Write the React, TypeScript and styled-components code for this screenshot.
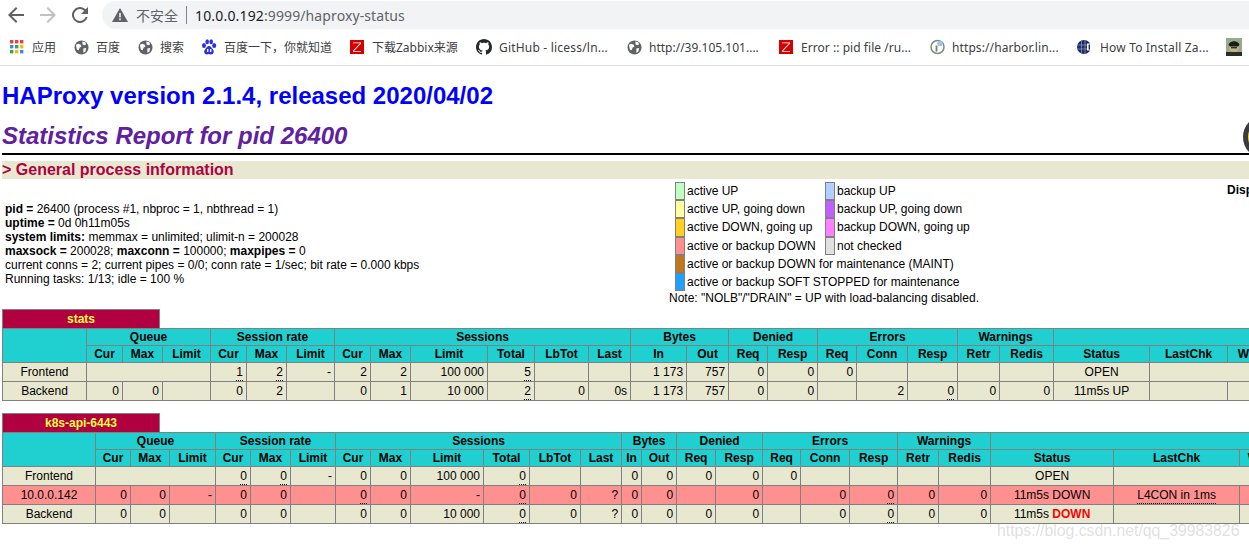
import React from "react";
import styled, { createGlobalStyle } from "styled-components";

const Global = createGlobalStyle`
  html, body { margin: 0; padding: 0; background: #fff; }
  body { font-family: "Liberation Sans", Arial, sans-serif; font-size: 12px; color: #000; overflow: hidden; }
`;

const Viewport = styled.div`
  position: relative;
  width: 1249px;
  height: 549px;
  overflow: hidden;
`;

/* ---------- browser chrome ---------- */
const Chrome = styled.header`
  height: 65px;
  border-bottom: 1px solid #dadce0;
  background: #fff;
  font-family: "Noto Sans", "Noto Sans CJK SC", sans-serif;
`;
const Toolbar = styled.div`
  height: 29px;
  display: flex;
  align-items: center;
  padding: 1px 0 0 0;
  box-sizing: border-box;
`;
const NavButton = styled.span`
  flex: none;
  width: 32px;
  height: 24px;
  display: flex;
  align-items: center;
  justify-content: center;
  color: ${p => p.$off ? "#bdc1c6" : "#5f6368"};
`;
const NavGroup = styled.div`
  display: flex;
  width: 102px;
  padding-left: 0;
  box-sizing: border-box;
`;
const Omnibox = styled.div`
  flex: 1;
  height: 28px;
  border-radius: 14px 0 0 14px;
  background: #f1f3f4;
  display: flex;
  align-items: center;
  padding-left: 10px;
  font-size: 14px;
`;
const Insecure = styled.span`
  margin-left: 8px;
  color: #5f6368;
  font-size: 14px;
  font-family: "Noto Sans CJK SC", sans-serif;
`;
const Divider = styled.span`
  width: 1px;
  height: 18px;
  background: #80868b;
  margin: 0 8px 0 8px;
`;
const Host = styled.span`
  color: #202124;
  font-size: 14px;
  letter-spacing: 0.17px;
`;
const UrlRest = styled.span`
  color: #5f6368;
  font-size: 14px;
  letter-spacing: 0.1px;
`;
const Bookmarks = styled.nav`
  height: 36px;
  display: flex;
  align-items: center;
  padding-left: 9px;
  gap: 17px;
  white-space: nowrap;
`;
const Bookmark = styled.div`
  display: flex;
  align-items: center;
  flex: none;
  gap: 7px;
  color: #3c4043;
  font-size: 12px;
  font-family: "Noto Sans", "Noto Sans CJK SC", sans-serif;
`;
const IconBox = styled.span`
  flex: none;
  width: 16px;
  height: 18px;
  display: flex;
  align-items: center;
  justify-content: center;
`;
const Label = styled.span`
  display: block;
  width: ${p => p.$w}px;
  overflow: hidden;
  letter-spacing: ${p => p.$ls ?? 0}px;
`;

/* ---------- page ---------- */
const Page = styled.main`
  width: 1600px;
  padding: 0 0 0 2px;
  box-sizing: border-box;
`;
const Version = styled.h1`
  margin: 16px 0 0 0;
  font-size: 24px;
  line-height: 28px;
  font-weight: bold;
  color: #0000ff;
  white-space: nowrap;
`;
const TitleRow = styled.div`
  margin-top: 12px;
  display: flex;
  height: 31px;
  width: 1285px;
  align-items: flex-start;
  justify-content: space-between;
`;
const Report = styled.h2`
  margin: 0;
  font-size: 24px;
  line-height: 28px;
  font-weight: bold;
  font-style: italic;
  color: #6020a0;
`;
const Logo = styled.svg`
  display: block;
  margin-top: -7px;
  flex: none;
`;
const Rule = styled.hr`
  margin: 0;
  border: 0;
  height: 2px;
  background: #000;
`;
const SectionTitle = styled.h3`
  margin: 6px 0 0 0;
  height: 18px;
  line-height: 18px;
  font-size: 16px;
  font-weight: bold;
  color: #b00040;
  background: #e8e8d0;
`;
const InfoBlock = styled.section`
  display: flex;
  height: 130px;
  font-size: 12px;
`;
const ProcessInfo = styled.div`
  width: 667px;
  box-sizing: border-box;
  padding: 23px 0 0 3px;
  line-height: 14px;
  flex: none;
`;
const Line = styled.div`
  white-space: nowrap;
`;
const Legend = styled.div`
  width: 558px;
  flex: none;
  padding-top: 3px;
`;
const LegendGrid = styled.div`
  display: grid;
  grid-template-columns: 150px 1fr;
  margin-left: 6px;
`;
const LegendItem = styled.div`
  display: flex;
  align-items: center;
  height: 18.2px;
  white-space: nowrap;
  grid-column: ${p => p.$span ? "1 / span 2" : "auto"};
`;
const Swatch = styled.span`
  flex: none;
  align-self: stretch;
  width: 8px;
  margin-right: 2px;
  border: 1px solid #808080;
  background: ${p => p.$c};
`;
const Note = styled.div`
  white-space: nowrap;
  line-height: 14px;
`;
const Display = styled.div`
  font-weight: bold;
  padding-top: 4px;
  white-space: nowrap;
`;

const Proxy = styled.section`
  margin-bottom: 12px;
`;
const ProxyName = styled.div`
  width: 156px;
  height: 18px;
  line-height: 19px;
  border: 1px solid #808080;
  border-bottom: 0;
  background: #b00040;
  color: #ffff40;
  font-weight: bold;
  text-align: center;
`;
const StatTable = styled.table`
  border-collapse: collapse;
  table-layout: fixed;
  width: ${p => p.$w}px;
`;
const Col = styled.col`
  width: ${p => p.$w}px;
`;
const HeadCell = styled.th`
  background: #20d0d0;
  border: 1px solid #808080;
  padding: 0;
  height: 16px;
  line-height: 14px;
  font-weight: bold;
  font-size: 12px;
  text-align: center;
  white-space: nowrap;
  overflow: hidden;
`;
const DataCell = styled.td`
  background: ${p => p.$down ? "#ff9090" : "#e8e8d0"};
  border: 1px solid #808080;
  padding: 0 3px;
  height: 18px;
  line-height: 14px;
  font-size: 12px;
  text-align: ${p => p.$center ? "center" : "right"};
  white-space: nowrap;
  overflow: hidden;
`;
const Dotted = styled.span`
  border-bottom: 1px dotted #000;
  padding-bottom: 1px;
`;
const DownText = styled.span`
  color: #ff0000;
  font-weight: bold;
`;

const Watermark = styled.div`
  position: absolute;
  left: 997px;
  top: 523px;
  font-size: 15.8px;
  line-height: 16px;
  color: rgba(185, 185, 185, 0.45);
  white-space: nowrap;
`;

/* ---------- icons ---------- */
const Back = ({ flip = false }: { flip?: boolean }) => (
  <svg width="16" height="16" viewBox="0 0 16 16" style={flip ? { transform: "scaleX(-1)" } : undefined}>
    <path d="M16 7H3.8l5.6-5.6L8 0 0 8l8 8 1.4-1.4L3.8 9H16z" fill="currentColor" />
  </svg>
);
const Reload = () => (
  <svg width="16" height="16" viewBox="0 0 16 16">
    <path d="M13.65 2.35A8 8 0 1 0 15.73 10h-2.08a6 6 0 1 1-1.41-6.24L9 7h7V0z" fill="currentColor" />
  </svg>
);
const Warn = () => (
  <svg width="16" height="14" viewBox="0 0 16 14">
    <path d="M0 14h16L8 0z" fill="#5f6368" />
    <path d="M7.2 5h1.6v4.6H7.2zM7.2 10.6h1.6v1.6H7.2z" fill="#f1f3f4" />
  </svg>
);
const Apps = () => (
  <svg width="14" height="14" viewBox="0 0 14 14">
    {[
      ["#ea4335", "#ea4335", "#ea4335"],
      ["#4285f4", "#34a853", "#fbbc05"],
      ["#34a853", "#fbbc05", "#4285f4"],
    ].map((row, y) =>
      row.map((c, x) => <rect key={`${x}${y}`} x={x * 5} y={y * 5} width="3.4" height="3.4" fill={c} />),
    )}
  </svg>
);
const Globe = () => (
  <svg width="15" height="15" viewBox="0 0 16 16">
    <circle cx="8" cy="8" r="7.5" fill="#5f6368" />
    <path d="M2 5l3-1 2 1 1 2-2 1-1 3-2-1zM9 1.5l3 1 1 2-2 1-2-1zM10 9l3-.5-1 4-2 1z" fill="#fff" />
  </svg>
);
const Paw = () => (
  <svg width="16" height="17" viewBox="0 0 16 17">
    <g fill="#2932e1">
      <ellipse cx="3" cy="6.5" rx="2" ry="2.6" />
      <ellipse cx="6.2" cy="2.8" rx="1.8" ry="2.5" />
      <ellipse cx="10.2" cy="2.8" rx="1.8" ry="2.5" />
      <ellipse cx="13.2" cy="6.5" rx="2" ry="2.6" />
      <path d="M8 7c-2 0-2.5 2-4 3.4-1.5 1.6-.8 5 2 5 1 0 1.300-.3 2-.3s1.200.3 2 .3c2.800 0 3.500-3.400 2-5C10.500 9 10 7 8 7z" />
    </g>
    <path d="M6 10v3h1.400v-3zM9 10v3h1.400v-3z" fill="#fff" />
  </svg>
);
const ZIcon = () => (
  <svg width="14" height="14" viewBox="0 0 14 14">
    <rect width="14" height="14" fill="#d40000" />
    <path d="M3 2.500h8v1L4 11h7v.8H3v-1L10 3.300H3z" fill="#fff" />
  </svg>
);
const GitHub = () => (
  <svg width="16" height="16" viewBox="0 0 16 16">
    <path
      fill="#24292e"
      d="M8 0C3.580 0 0 3.580 0 8c0 3.540 2.290 6.530 5.470 7.590.4.070.55-.17.55-.38 0-.19-.01-.82-.01-1.490-2.010.37-2.530-.49-2.690-.94-.09-.23-.48-.94-.82-1.130-.28-.15-.68-.52-.01-.53.63-.01 1.080.58 1.230.82.72 1.210 1.870.87 2.330.66.07-.52.28-.87.51-1.070-1.780-.2-3.640-.89-3.640-3.950 0-.87.31-1.590.82-2.150-.08-.2-.36-1.020.08-2.120 0 0 .67-.21 2.200.82.64-.18 1.320-.27 2-.27s1.360.09 2 .27c1.530-1.040 2.200-.82 2.200-.82.44 1.100.16 1.920.08 2.120.51.56.82 1.270.82 2.150 0 3.070-1.870 3.750-3.650 3.950.29.25.54.73.54 1.480 0 1.070-.01 1.930-.01 2.200 0 .21.15.46.55.38A8.010 8.010 0 0 0 16 8c0-4.420-3.580-8-8-8z"
    />
  </svg>
);
const Harbor = () => (
  <svg width="15" height="16" viewBox="0 0 15 16">
    <circle cx="7.500" cy="8" r="6.500" fill="#fff" stroke="#7c8c7c" strokeWidth="1.500" />
    <rect x="5.600" y="6.500" width="1.800" height="6" fill="#6b7f6b" />
    <circle cx="10" cy="4.500" r="2.800" fill="#9cc3e8" />
  </svg>
);
const Wp = () => (
  <svg width="16" height="16" viewBox="0 0 16 16">
    <circle cx="7" cy="8" r="7" fill="#1c2a63" />
    <path d="M1 6h12M1 10h12M4.500 1.500v13M8 1v14" stroke="#8d97c4" strokeWidth=".8" />
    <rect x="10" y="4.500" width="4.500" height="7" fill="#fff" />
    <rect x="11.600" y="5.500" width="1.400" height="5" fill="#1c2a63" />
  </svg>
);
const Avatar = () => (
  <svg width="16" height="18" viewBox="0 0 16 18">
    <rect width="16" height="18" fill="#9aa98a" />
    <ellipse cx="8" cy="9.500" rx="4.800" ry="4.800" fill="#c9b08c" />
    <path d="M2.500 7c1-5 10-5 11 0l-1.500 1.500-8 0z" fill="#1a1d16" />
    <rect x="5" y="9" width="6" height="1.400" fill="#2c3326" />
    <rect y="14" width="16" height="4" fill="#28301f" />
  </svg>
);
const HaproxyLogo = () => (
  <Logo width="44" height="38" viewBox="0 0 44 38">
    <circle cx="22" cy="22" r="19.500" fill="#f4d81c" stroke="#3a3a40" strokeWidth="5" />
  </Logo>
);

/* ---------- data ---------- */
type Cell =
  | string
  | { t?: React.ReactNode; u?: boolean; span?: number; center?: boolean };

const u = (t: string): Cell => ({ t, u: true });
const b = "";

type Row = { down?: boolean; cells: Cell[] };

const widths1 = [84, 36, 40, 48, 36, 40, 48, 36, 40, 77, 47, 54, 42, 56, 42, 39, 50, 39, 51, 50, 42, 54, 96, 78, 50];
const widths2 = [93, 35, 39, 46, 35, 40, 45, 35, 40, 73, 46, 51, 41, 20, 35, 39, 47, 38, 49, 48, 41, 52, 123, 126, 46];

const HEAD_GROUPS: { label: string; span: number }[] = [
  { label: "Queue", span: 3 },
  { label: "Session rate", span: 3 },
  { label: "Sessions", span: 6 },
  { label: "Bytes", span: 2 },
  { label: "Denied", span: 2 },
  { label: "Errors", span: 3 },
  { label: "Warnings", span: 2 },
  { label: "", span: 3 },
];
const HEAD_SUB = [
  "Cur", "Max", "Limit", "Cur", "Max", "Limit", "Cur", "Max", "Limit", "Total", "LbTot", "Last",
  "In", "Out", "Req", "Resp", "Req", "Conn", "Resp", "Retr", "Redis", "Status", "LastChk", "Wght",
];

const rows1: Row[] = [
  {
    cells: [
      { t: "Frontend", center: true }, { span: 3 }, u("1"), u("2"), "-", "2", "2", "100 000", u("5"), b, b,
      "1 173", "757", "0", "0", "0", b, b, b, b, { t: "OPEN", center: true }, { span: 2 },
    ],
  },
  {
    cells: [
      { t: "Backend", center: true }, "0", "0", b, "0", "2", b, "0", "1", "10 000", u("2"), "0", "0s",
      "1 173", "757", "0", "0", b, "2", u("0"), "0", "0", { t: "11m5s UP", center: true }, b, b,
    ],
  },
];
const rows2: Row[] = [
  {
    cells: [
      { t: "Frontend", center: true }, { span: 3 }, u("0"), u("0"), "-", "0", "0", "100 000", u("0"), b, b,
      "0", "0", "0", "0", "0", b, b, b, b, { t: "OPEN", center: true }, { span: 2 },
    ],
  },
  {
    down: true,
    cells: [
      { t: "10.0.0.142", center: true }, "0", "0", "-", "0", "0", b, u("0"), "0", "-", u("0"), "0", "?",
      "0", "0", b, "0", b, "0", u("0"), "0", "0", { t: "11m5s DOWN", center: true },
      { t: <Dotted>L4CON in 1ms</Dotted>, center: true }, b,
    ],
  },
  {
    cells: [
      { t: "Backend", center: true }, "0", "0", b, "0", "0", b, "0", "0", "10 000", u("0"), "0", "?",
      "0", "0", "0", "0", b, "0", u("0"), "0", "0",
      { t: <>11m5s <DownText>DOWN</DownText></>, center: true }, b, b,
    ],
  },
];

const ProxyTable = ({ name, widths, rows }: { name: string; widths: number[]; rows: Row[] }) => (
  <Proxy>
    <ProxyName>{name}</ProxyName>
    <StatTable $w={widths.reduce((a, c) => a + c, 0)}>
      <colgroup>
        {widths.map((w, i) => <Col key={i} $w={w} />)}
      </colgroup>
      <thead>
        <tr>
          <HeadCell rowSpan={2} />
          {HEAD_GROUPS.map((g, i) => <HeadCell key={i} colSpan={g.span}>{g.label}</HeadCell>)}
        </tr>
        <tr>
          {HEAD_SUB.map((h, i) => <HeadCell key={i}>{h}</HeadCell>)}
        </tr>
      </thead>
      <tbody>
        {rows.map((r, ri) => (
          <tr key={ri}>
            {r.cells.map((c, i) => {
              const cell = typeof c === "string" ? { t: c } : c;
              return (
                <DataCell key={i} colSpan={cell.span} $center={cell.center} $down={r.down}>
                  {cell.u ? <Dotted>{cell.t}</Dotted> : cell.t}
                </DataCell>
              );
            })}
          </tr>
        ))}
      </tbody>
    </StatTable>
  </Proxy>
);

const LEGEND: { c: string; t: string; span?: boolean }[] = [
  { c: "#c0ffc0", t: "active UP" },
  { c: "#b0d0ff", t: "backup UP" },
  { c: "#ffffa0", t: "active UP, going down" },
  { c: "#c060ff", t: "backup UP, going down" },
  { c: "#ffd020", t: "active DOWN, going up" },
  { c: "#ff80ff", t: "backup DOWN, going up" },
  { c: "#ff9090", t: "active or backup DOWN" },
  { c: "#e0e0e0", t: "not checked" },
  { c: "#c07820", t: "active or backup DOWN for maintenance (MAINT)", span: true },
  { c: "#20a0ff", t: "active or backup SOFT STOPPED for maintenance", span: true },
];

const BOOKMARKS: { icon: React.ReactNode; label: string; w: number; ls?: number }[] = [
  { icon: <Apps />, label: "应用", w: 24 },
  { icon: <Globe />, label: "百度", w: 24 },
  { icon: <Globe />, label: "搜索", w: 24 },
  { icon: <Paw />, label: "百度一下，你就知道", w: 108 },
  { icon: <ZIcon />, label: "下载Zabbix来源", w: 87 },
  { icon: <GitHub />, label: "GitHub - licess/ln...", w: 110, ls: 0.2 },
  { icon: <Globe />, label: "http://39.105.101....", w: 112 },
  { icon: <ZIcon />, label: "Error :: pid file /ru...", w: 111, ls: 0.05 },
  { icon: <Harbor />, label: "https://harbor.lin...", w: 108, ls: 0.1 },
  { icon: <Wp />, label: "How To Install Za...", w: 109, ls: 0.17 },
  { icon: <Avatar />, label: "", w: 0 },
];

export default function App() {
  return (
    <Viewport>
      <Global />
      <Chrome>
        <Toolbar>
          <NavGroup>
            <NavButton><Back /></NavButton>
            <NavButton $off><Back flip /></NavButton>
            <NavButton><Reload /></NavButton>
          </NavGroup>
          <Omnibox>
            <Warn />
            <Insecure>不安全</Insecure>
            <Divider />
            <Host>10.0.0.192</Host>
            <UrlRest>:9999/haproxy-status</UrlRest>
          </Omnibox>
        </Toolbar>
        <Bookmarks>
          {BOOKMARKS.map((m, i) => (
            <Bookmark key={i}>
              <IconBox>{m.icon}</IconBox>
              {m.label && <Label $w={m.w} $ls={m.ls}>{m.label}</Label>}
            </Bookmark>
          ))}
        </Bookmarks>
      </Chrome>
      <Page>
        <Version>HAProxy version 2.1.4, released 2020/04/02</Version>
        <TitleRow>
          <Report>Statistics Report for pid 26400</Report>
          <HaproxyLogo />
        </TitleRow>
        <Rule />
        <SectionTitle>&gt; General process information</SectionTitle>
        <InfoBlock>
          <ProcessInfo>
            <Line><b>pid = </b>26400 (process #1, nbproc = 1, nbthread = 1)</Line>
            <Line><b>uptime = </b>0d 0h11m05s</Line>
            <Line><b>system limits:</b> memmax = unlimited; ulimit-n = 200028</Line>
            <Line><b>maxsock = </b>200028; <b>maxconn = </b>100000; <b>maxpipes = </b>0</Line>
            <Line>current conns = 2; current pipes = 0/0; conn rate = 1/sec; bit rate = 0.000 kbps</Line>
            <Line>Running tasks: 1/13; idle = 100 %</Line>
          </ProcessInfo>
          <Legend>
            <LegendGrid>
              {LEGEND.map(l => (
                <LegendItem key={l.t} $span={l.span}>
                  <Swatch $c={l.c} />
                  {l.t}
                </LegendItem>
              ))}
            </LegendGrid>
            <Note>Note: "NOLB"/"DRAIN" = UP with load-balancing disabled.</Note>
          </Legend>
          <Display>Display option:</Display>
        </InfoBlock>
        <ProxyTable name="stats" widths={widths1} rows={rows1} />
        <ProxyTable name="k8s-api-6443" widths={widths2} rows={rows2} />
      </Page>
      <Watermark>https://blog.csdn.net/qq_39983826</Watermark>
    </Viewport>
  );
}
